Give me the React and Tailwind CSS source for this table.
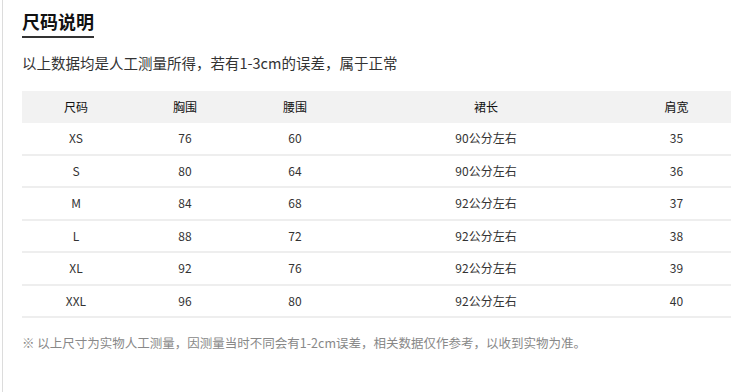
const columns = [
  { label: '尺码', width: 'w-[108px]' },
  { label: '胸围', width: 'w-[110px]' },
  { label: '腰围', width: 'w-[110px]' },
  { label: '裙长', width: 'w-[272px]' },
  { label: '肩宽', width: 'w-[109px]' },
];

const rows = [
  ['XS', '76', '60', '90公分左右', '35'],
  ['S', '80', '64', '90公分左右', '36'],
  ['M', '84', '68', '92公分左右', '37'],
  ['L', '88', '72', '92公分左右', '38'],
  ['XL', '92', '76', '92公分左右', '39'],
  ['XXL', '96', '80', '92公分左右', '40'],
];

export default function App() {
  return (
    <div
      className="w-[750px] h-[392px] bg-white overflow-hidden"
      style={{ fontFamily: '"Microsoft YaHei", "Noto Sans CJK SC", "Noto Sans", sans-serif' }}
    >
      <div className="ml-[2px] h-full border-l border-[#dcdcdc] pl-[19px] pt-[10px]">
        {/* Title */}
        <div className="inline-block border-b-2 border-[#333] pb-[4px]">
          <h1 className="text-[18px] leading-[22px] font-bold text-[#111]">尺码说明</h1>
        </div>
        <p className="mt-[16px] text-[14.5px] leading-[18px] text-[#333]">
          以上数据均是人工测量所得，若有1-3cm的误差，属于正常
        </p>

        {/* Size table */}
        <div className="mt-[19px] w-[709px] text-[12px] text-[#333]">
          <div className="flex h-8 items-center bg-[#f2f2f2] text-[#111]">
            {columns.map((col) => (
              <div key={col.label} className={`${col.width} text-center`}>
                {col.label}
              </div>
            ))}
          </div>
          {rows.map((row) => (
            <div key={row[0]} className="flex h-[32.5px] items-center border-b-2 border-[#eeeeee]">
              {row.map((cell, i) => (
                <div key={i} className={`${columns[i].width} text-center`}>
                  {cell}
                </div>
              ))}
            </div>
          ))}
        </div>

        <p className="mt-[17px] text-[12.5px] leading-[16px] text-[#888]">
          ※ 以上尺寸为实物人工测量，因测量当时不同会有1-2cm误差，相关数据仅作参考，以收到实物为准。
        </p>
      </div>
    </div>
  );
}
